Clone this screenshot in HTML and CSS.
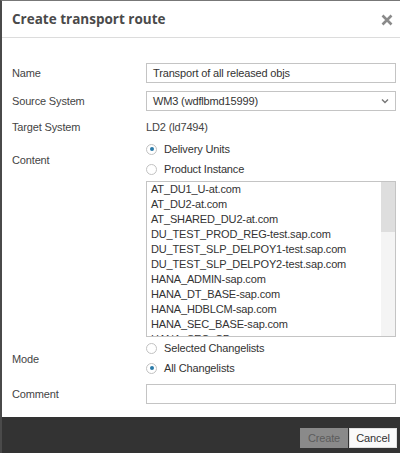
FILE: index.html
```html
<!DOCTYPE html>
<html>
<head>
<meta charset="utf-8">
<link rel="stylesheet" href="styles.css">
</head>
<body>
<div class="dialog">
  <div class="header">
    <div class="title">Create transport route</div>
    <svg class="close" width="12" height="12" viewBox="0 0 12 12"><path d="M1.5 1.5 L10.5 10.5 M10.5 1.5 L1.5 10.5" stroke="#8a8a8a" stroke-width="2.6" stroke-linecap="butt"/></svg>
  </div>
  <div class="form">
    <div class="row r-name">
      <div class="label">Name</div>
      <div class="input">Transport of all released objs</div>
    </div>
    <div class="row r-source">
      <div class="label">Source System</div>
      <div class="input select">
        <span>WM3 (wdflbmd15999)</span>
        <svg class="chev" width="8" height="6" viewBox="0 0 8 6"><path d="M1 1.5 L4 4.5 L7 1.5" fill="none" stroke="#777" stroke-width="1.4"/></svg>
      </div>
    </div>
    <div class="row r-target">
      <div class="label">Target System</div>
      <div class="value">LD2 (ld7494)</div>
    </div>
    <div class="row r-content">
      <div class="label">Content</div>
      <div class="radios">
        <div class="radio"><span class="dot on"></span>Delivery Units</div>
        <div class="radio"><span class="dot"></span>Product Instance</div>
      </div>
    </div>
    <div class="row r-list">
      <div class="label"></div>
      <div class="list">
        <div class="items">
          <div>AT_DU1_U-at.com</div>
          <div>AT_DU2-at.com</div>
          <div>AT_SHARED_DU2-at.com</div>
          <div>DU_TEST_PROD_REG-test.sap.com</div>
          <div>DU_TEST_SLP_DELPOY1-test.sap.com</div>
          <div>DU_TEST_SLP_DELPOY2-test.sap.com</div>
          <div>HANA_ADMIN-sap.com</div>
          <div>HANA_DT_BASE-sap.com</div>
          <div>HANA_HDBLCM-sap.com</div>
          <div>HANA_SEC_BASE-sap.com</div>
          <div>HANA_SEC_CP-sap.com</div>
        </div>
        <div class="scrollbar"><div class="thumb"></div></div>
      </div>
    </div>
    <div class="row r-mode">
      <div class="label">Mode</div>
      <div class="radios">
        <div class="radio"><span class="dot"></span>Selected Changelists</div>
        <div class="radio"><span class="dot on"></span>All Changelists</div>
      </div>
    </div>
    <div class="row r-comment">
      <div class="label">Comment</div>
      <div class="input"></div>
    </div>
  </div>
  <div class="footer">
    <button class="btn create">Create</button>
    <button class="btn cancel">Cancel</button>
  </div>
</div>
</body>
</html>
```
FILE: styles.css
```css
html, body {
  margin: 0;
  padding: 0;
  background: #ffffff;
}
body {
  font-family: "Liberation Sans", Arial, sans-serif;
  font-size: 11px;
  letter-spacing: -0.15px;
  color: #444;
}
.dialog {
  width: 398px;
  height: 452px;
  border-left: 2px solid #4a4a4a;
  border-top: 1px solid #777;
  display: flex;
  flex-direction: column;
  background: #fff;
}
.header {
  height: 36px;
  border-bottom: 1px solid #dcdcdc;
  display: flex;
  align-items: center;
  justify-content: space-between;
  padding: 0 7px 0 10px;
}
.title {
  font-family: "Open Sans", "Liberation Sans", sans-serif;
  font-weight: bold;
  font-size: 13.5px;
  letter-spacing: 0;
  color: #4a4a4a;
  margin-top: -1px;
}
.close {
  margin-top: 1px;
}
.form {
  flex: 1;
  padding: 0 4px 0 10px;
  display: flex;
  flex-direction: column;
}
.row {
  display: flex;
  align-items: center;
}
.label {
  width: 134px;
  flex: none;
  color: #444;
}
.r-content .label, .r-mode .label {
  padding-top: 2px;
}
.input {
  flex: 1;
  height: 18px;
  border: 1px solid #c4c4c4;
  display: flex;
  align-items: center;
  padding: 0 6px;
  color: #333;
}
.select {
  justify-content: space-between;
}
.r-name { margin-top: 25px; }
.r-source { margin-top: 8px; }
.r-target { margin-top: 8px; height: 16px; }
.r-content { margin-top: 4px; }
.r-list { margin-top: 2px; }
.r-mode { margin-top: 1px; }
.r-comment { margin-top: 6px; }
.value { color: #444; }
.radios {
  display: flex;
  flex-direction: column;
}
.radio {
  height: 20px;
  display: flex;
  align-items: center;
  color: #333;
}
.dot {
  width: 11px;
  height: 11px;
  border: 1px solid #c2c2c2;
  border-radius: 50%;
  margin-right: 7px;
  box-sizing: border-box;
  background: #fff;
  display: flex;
  align-items: center;
  justify-content: center;
}
.dot.on::after {
  content: "";
  width: 4px;
  height: 4px;
  border-radius: 50%;
  background: #2a7aa8;
}
.list {
  flex: 1;
  height: 154px;
  border: 1px solid #c4c4c4;
  display: flex;
  overflow: hidden;
}
.items {
  flex: 1;
  padding: 0 0 0 4px;
  line-height: 15px;
  color: #333;
  overflow: hidden;
}
.scrollbar {
  width: 14px;
  background: #f4f4f4;
  flex: none;
}
.thumb {
  height: 50px;
  background: #dedede;
}
.footer {
  height: 36px;
  background: #333333;
  display: flex;
  justify-content: flex-end;
  align-items: flex-end;
  padding: 0 3px 5px 0;
  box-sizing: border-box;
  gap: 1px;
}
.btn {
  font-family: "Liberation Sans", Arial, sans-serif;
  font-size: 11px;
  letter-spacing: -0.15px;
  height: 20px;
  width: 48px;
  padding: 0;
  border: 1px solid #999;
}
.create {
  background: #8a8a8a;
  color: #5c5c5c;
  border-color: #8a8a8a;
}
.cancel {
  background: #fafafa;
  color: #333;
  border-color: #e0e0e0;
}
```
